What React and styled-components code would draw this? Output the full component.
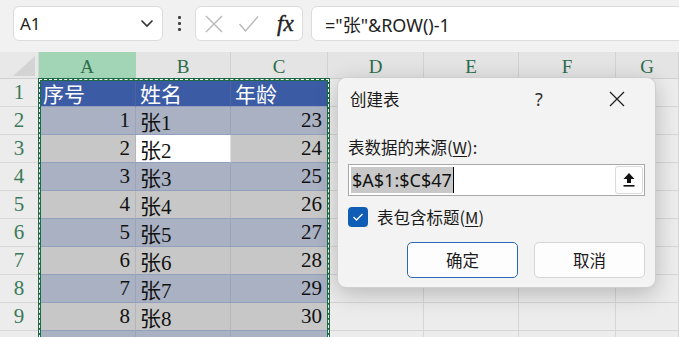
import React from "react";
import styled, { createGlobalStyle } from "styled-components";

const Global = createGlobalStyle`
  html, body { margin: 0; padding: 0; background: #efefef; overflow: hidden; }
  * { box-sizing: border-box; }
`;

const Page = styled.div`
  position: relative;
  width: 679px;
  height: 337px;
  overflow: hidden;
  background: #efefef;
`;

const Toolbar = styled.div`
  display: flex;
  align-items: center;
  height: 52px;
  padding: 6px 0 11px 13px;
  background: #f1f1f1;
`;

const NameBox = styled.div`
  width: 150px;
  height: 35px;
  background: #fff;
  border: 1px solid #dcdcdc;
  border-radius: 6px;
  display: flex;
  align-items: center;
  justify-content: space-between;
  padding: 0 8px 0 6px;
  font-family: "Noto Sans", "Open Sans", sans-serif;
  font-size: 17px;
  color: #1e1e1e;
`;

const Dots = styled.div`
  width: 32px;
  display: flex;
  flex-direction: column;
  align-items: center;
  gap: 3px;
  span { width: 3px; height: 3px; background: #444; border-radius: 1px; }
`;

const FxBox = styled.div`
  width: 108px;
  height: 35px;
  background: #fff;
  border: 1px solid #dcdcdc;
  border-radius: 6px;
  display: flex;
  align-items: center;
  padding: 0 0 0 8px;
  gap: 14px;
`;

const FxText = styled.span`
  font-family: "Liberation Serif", serif;
  font-style: italic;
  font-size: 23px;
  color: #222;
  margin-left: 4px;
  -webkit-text-stroke: 0.4px #222;
`;

const Formula = styled.div`
  flex: 1;
  margin-left: 8px;
  margin-right: -10px;
  height: 35px;
  background: #fff;
  border: 1px solid #dcdcdc;
  border-radius: 6px;
  display: flex;
  align-items: center;
  padding-left: 13px;
  font-family: "Noto Sans", "Noto Sans CJK SC", sans-serif;
  font-size: 18px;
  color: #222;
`;

const Sheet = styled.div`
  display: grid;
  grid-template-columns: 39px 97px 95px 97px 96px 95px 97px 63px;
  grid-template-rows: 27px;
  grid-auto-rows: 28px;
  background: #ececec;
`;

const Placed = styled.div`
  grid-row: ${(p) => p.$r};
  grid-column: ${(p) => p.$c};
`;

const Corner = styled(Placed)`
  display: flex;
  align-items: flex-end;
  justify-content: flex-end;
  padding: 0 3px 2px 0;
  background: #e8e8e8;
  border-right: 1px solid #d6d6d6;
  border-bottom: 1px solid #d0d0d0;
`;

const ColHead = styled(Placed)`
  display: flex;
  align-items: center;
  justify-content: center;
  background: ${(p) => (p.$active ? "#a1d5b6" : "#e4e4e4")};
  border-right: 1px solid ${(p) => (p.$active ? "#a1d5b6" : "#d2d2d2")};
  border-bottom: 1px solid #d0d0d0;
  font-family: "Liberation Serif", serif;
  font-size: 19px;
  color: #2e6d4b;
  padding-top: 4px;
`;

const RowHead = styled(Placed)`
  display: flex;
  align-items: center;
  justify-content: center;
  background: #ececec;
  border-right: 1px solid #d2d2d2;
  border-bottom: 1px solid #d8d8d8;
  font-family: "Liberation Serif", serif;
  font-size: 21px;
  color: #3a7a58;
`;

const tableBg = (kind) =>
  kind === "head" ? "#3c5ba5" : kind === "band" ? "#a9b1c3" : kind === "active" ? "#ffffff" : "#c7c7c7";

const Cell = styled(Placed)`
  display: flex;
  align-items: center;
  justify-content: ${(p) => (p.$right ? "flex-end" : "flex-start")};
  padding: 0 ${(p) => (p.$right ? "5px" : "0")} 0 ${(p) => (p.$right ? "0" : "4px")};
  background: ${(p) => (p.$kind ? tableBg(p.$kind) : "#ececec")};
  border-right: 1px solid ${(p) => (p.$kind ? "rgba(120,130,150,0.25)" : "#d6d6d6")};
  border-bottom: 1px solid ${(p) => (p.$kind ? "#93a0bd" : "#d6d6d6")};
  font-family: "Liberation Serif", "Noto Sans CJK SC", serif;
  font-size: 21px;
  color: ${(p) => (p.$kind === "head" ? "#ffffff" : "#111")};
  white-space: nowrap;
  overflow: hidden;
`;

const Marquee = styled.div`
  grid-column: 2 / 5;
  grid-row: 2 / 12;
  margin: -1px -2px 0 -1px;
  border: 3px solid #1d6b42;
  position: relative;
  pointer-events: none;
  z-index: 2;
  &::after {
    content: "";
    position: absolute;
    inset: -2px;
    border: 1px dashed #ffffff;
  }
`;

const Dialog = styled.div`
  position: absolute;
  left: 337px;
  top: 77px;
  width: 319px;
  height: 211px;
  background: #f3f3f3;
  border: 1px solid #cfcfcf;
  border-radius: 9px;
  box-shadow: 0 6px 22px rgba(0, 0, 0, 0.22);
  z-index: 5;
  padding: 0 10px 0 10px;
  display: flex;
  flex-direction: column;
  font-family: "Noto Sans CJK SC", "Noto Sans", sans-serif;
  color: #1b1b1b;
  font-size: 16px;
`;

const TitleBar = styled.div`
  display: flex;
  align-items: center;
  height: 42px;
  padding: 0 0 0 2px;
`;

const Title = styled.div`
  flex: 1;
  font-size: 16.5px;
`;

const Help = styled.div`
  width: 20px;
  text-align: center;
  font-size: 18px;
  color: #333;
  margin-right: 56px;
  font-family: "Noto Sans", sans-serif;
`;

const Close = styled.div`
  width: 24px;
  display: flex;
  justify-content: center;
  margin-right: 16px;
`;

const Label = styled.div`
  margin-top: 15px;
  font-size: 16.5px;
  line-height: 24px;
  u { text-underline-offset: 2px; }
`;

const InputBox = styled.div`
  margin-top: 5px;
  height: 32px;
  background: #fff;
  border: 1px solid #a9a9a9;
  display: flex;
  align-items: center;
  padding: 0 1px 0 2px;
`;

const Selected = styled.span`
  background: #c8c8c8;
  font-family: "Noto Sans", sans-serif;
  font-size: 18px;
  line-height: 26px;
  color: #111;
  padding: 0 1px;
  border-right: 1.5px solid #000;
`;

const PickBtn = styled.div`
  margin-left: auto;
  width: 28px;
  height: 28px;
  background: #fdfdfd;
  border: 1px solid #d9d9d9;
  border-radius: 3px;
  display: flex;
  align-items: center;
  justify-content: center;
`;

const CheckRow = styled.div`
  display: flex;
  align-items: center;
  margin-top: 9px;
  gap: 9px;
  font-size: 16.5px;
  u { text-underline-offset: 2px; }
`;

const Box = styled.div`
  width: 20px;
  height: 20px;
  border-radius: 4px;
  background: #0f5db5;
  display: flex;
  align-items: center;
  justify-content: center;
`;

const Buttons = styled.div`
  display: flex;
  justify-content: flex-end;
  gap: 16px;
  margin-top: 13px;
`;

const Btn = styled.div`
  width: 111px;
  height: 36px;
  background: #fdfdfd;
  border: 1px solid ${(p) => (p.$primary ? "#2a69b5" : "#d6d6d6")};
  border-radius: 5px;
  display: flex;
  align-items: center;
  justify-content: center;
  font-size: 16.5px;
`;

const rows = [
  ["序号", "姓名", "年龄"],
  [1, "张1", 23],
  [2, "张2", 24],
  [3, "张3", 25],
  [4, "张4", 26],
  [5, "张5", 27],
  [6, "张6", 28],
  [7, "张7", 29],
  [8, "张8", 30],
  ["", "", ""],
];

const cols = ["A", "B", "C", "D", "E", "F", "G"];

export default function App() {
  return (
    <Page>
      <Global />
      <Toolbar>
        <NameBox>
          <span>A1</span>
          <svg width="14" height="9" viewBox="0 0 14 9">
            <polyline points="1.5,1.5 7,7 12.5,1.5" fill="none" stroke="#333" strokeWidth="1.6" />
          </svg>
        </NameBox>
        <Dots><span /><span /><span /></Dots>
        <FxBox>
          <svg width="20" height="20" viewBox="0 0 20 20">
            <path d="M2 2 L18 18 M18 2 L2 18" stroke="#b9b9b9" strokeWidth="1.4" />
          </svg>
          <svg width="21" height="18" viewBox="0 0 21 18">
            <polyline points="1.5,9 7.5,16 20,1.5" fill="none" stroke="#b9b9b9" strokeWidth="1.4" />
          </svg>
          <FxText>fx</FxText>
        </FxBox>
        <Formula>="张"&amp;ROW()-1</Formula>
      </Toolbar>
      <Sheet>
        <Corner $r={1} $c={1}>
          <svg width="22" height="20" viewBox="0 0 22 20">
            <polygon points="22,0 22,20 0,20" fill="#d3d3d3" />
          </svg>
        </Corner>
        {cols.map((c, i) => (
          <ColHead key={c} $r={1} $c={i + 2} $active={i === 0}>{c}</ColHead>
        ))}
        <ColHead $r={1} $c={9} />
        {rows.map((r, ri) => {
          const head = ri === 0;
          const kind = head ? "head" : ri % 2 === 1 ? "band" : "gray";
          const row = ri + 2;
          return (
            <React.Fragment key={ri}>
              <RowHead $r={row} $c={1}>{ri < 9 ? ri + 1 : ""}</RowHead>
              <Cell $r={row} $c={2} $kind={kind} $right={!head}>{r[0]}</Cell>
              <Cell $r={row} $c={3} $kind={ri === 2 ? "active" : kind}>{r[1]}</Cell>
              <Cell $r={row} $c={4} $kind={kind} $right={!head}>{r[2]}</Cell>
              {[5, 6, 7, 8, 9].map((c) => (
                <Cell key={c} $r={row} $c={c} />
              ))}
            </React.Fragment>
          );
        })}
        <Marquee />
      </Sheet>
      <Dialog>
        <TitleBar>
          <Title>创建表</Title>
          <Help>?</Help>
          <Close>
            <svg width="16" height="16" viewBox="0 0 16 16">
              <path d="M1 1 L15 15 M15 1 L1 15" stroke="#222" strokeWidth="1.3" />
            </svg>
          </Close>
        </TitleBar>
        <Label>表数据的来源(<u>W</u>):</Label>
        <InputBox>
          <Selected>$A$1:$C$47</Selected>
          <PickBtn>
            <svg width="12" height="16" viewBox="0 0 12 16">
              <polygon points="6,1 11.5,7 8,7 8,11 4,11 4,7 0.5,7" fill="#111" />
              <rect x="0.5" y="13" width="11" height="1.6" fill="#111" />
            </svg>
          </PickBtn>
        </InputBox>
        <CheckRow>
          <Box>
            <svg width="12" height="10" viewBox="0 0 12 10">
              <polyline points="1.5,5 4.5,8 10.5,2" fill="none" stroke="#fff" strokeWidth="1.3" />
            </svg>
          </Box>
          <span>表包含标题(<u>M</u>)</span>
        </CheckRow>
        <Buttons>
          <Btn $primary>确定</Btn>
          <Btn>取消</Btn>
        </Buttons>
      </Dialog>
    </Page>
  );
}
